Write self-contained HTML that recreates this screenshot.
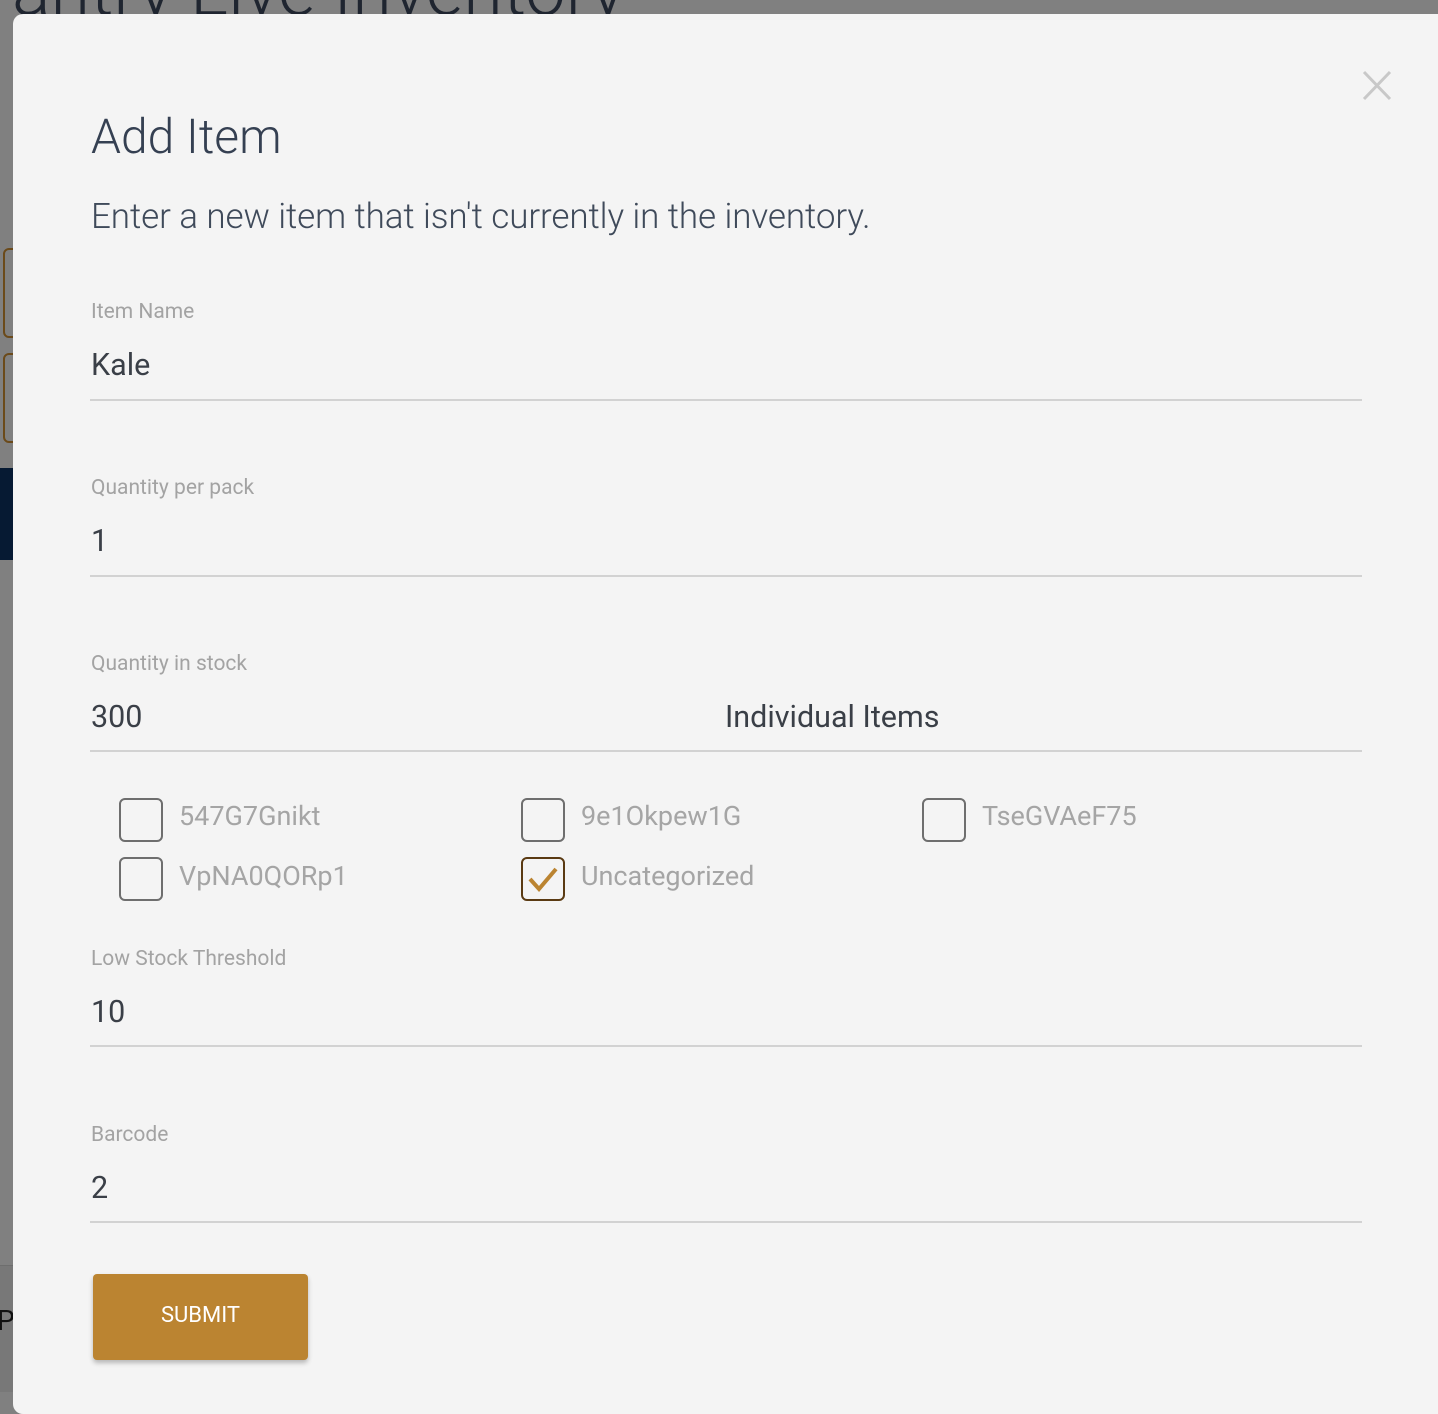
<!DOCTYPE html>
<html><head><meta charset="utf-8"><style>
*{margin:0;padding:0;box-sizing:border-box}
body{width:1438px;height:1392px;overflow:hidden;background:#808080;position:relative;font-family:"Roboto","Liberation Sans",sans-serif}
.bgt{position:absolute;left:-32px;top:-52px;font-size:72px;font-weight:300;color:#1f2530;white-space:nowrap}
.ob{position:absolute;left:3px;width:30px;border:2px solid #6b4a1a;border-radius:6px}
.modal{position:absolute;left:13px;top:14px;width:1440px;height:1400px;background:#f4f4f4;border-radius:10px}
.a{position:absolute;white-space:nowrap}
.h1{left:91px;top:108px;font-size:48px;font-weight:300;color:#354052}
.sub{left:91px;top:196px;font-size:35px;font-weight:300;color:#3f4a5a;letter-spacing:-0.1px}
.lbl{font-size:21px;color:#a3a3a3;left:91px}
.val{font-size:30.5px;color:#3a3f47;left:91px}
.ul{position:absolute;height:2px;background:#d2d2d2}
.cb{position:absolute;width:44px;height:44px;border:2px solid #6e6e6e;border-radius:6px}
.cl{font-size:27px;color:#a5a5a5}
.btn{position:absolute;left:93px;top:1274px;width:215px;height:86px;background:#bb8431;border-radius:4px;box-shadow:0 3px 5px rgba(0,0,0,.25);color:#fff;font-size:22px;text-align:center;line-height:84px}
</style></head><body>
<div class="bgt">Pantry Live Inventory</div>
<div class="ob" style="top:248px;height:90px"></div>
<div class="ob" style="top:353px;height:90px"></div>
<div style="position:absolute;left:0;top:468px;width:20px;height:92px;background:#061a33"></div>
<div style="position:absolute;left:0;top:1265px;width:20px;height:127px;background:#787878;border-top:1px solid #6e6e6e"></div>
<div class="a" style="left:-3px;top:1304px;font-size:28px;color:#111">P</div>
<div class="modal"></div>
<svg style="position:absolute;left:1362px;top:70px" width="30" height="31"><path d="M2 2L28 29M28 2L2 29" stroke="#c8c8c8" stroke-width="3"/></svg>
<div class="a h1">Add Item</div>
<div class="a sub">Enter a new item that isn't currently in the inventory.</div>

<div class="a lbl" style="top:300px">Item Name</div>
<div class="a val" style="top:348px">Kale</div>
<div class="ul" style="left:90px;top:399px;width:1272px"></div>

<div class="a lbl" style="top:476px">Quantity per pack</div>
<div class="a val" style="top:524px">1</div>
<div class="ul" style="left:90px;top:575px;width:1272px"></div>

<div class="a lbl" style="top:652px">Quantity in stock</div>
<div class="a val" style="top:700px">300</div>
<div class="a val" style="left:725px;top:700px">Individual Items</div>
<div class="ul" style="left:90px;top:750px;width:1272px"></div>

<div class="cb" style="left:119px;top:798px"></div><div class="a cl" style="left:179px;top:800px">547G7Gnikt</div>
<div class="cb" style="left:521px;top:798px"></div><div class="a cl" style="left:581px;top:800px">9e1Okpew1G</div>
<div class="cb" style="left:922px;top:798px"></div><div class="a cl" style="left:982px;top:800px">TseGVAeF75</div>
<div class="cb" style="left:119px;top:857px"></div><div class="a cl" style="left:179px;top:860px">VpNA0QORp1</div>
<div class="cb" style="left:521px;top:857px;border-color:#5a3a12"></div>
<svg style="position:absolute;left:521px;top:857px" width="44" height="44"><path d="M9 22L18 32L35 12" fill="none" stroke="#bb8431" stroke-width="4"/></svg>
<div class="a cl" style="left:581px;top:860px">Uncategorized</div>

<div class="a lbl" style="top:947px">Low Stock Threshold</div>
<div class="a val" style="top:995px">10</div>
<div class="ul" style="left:90px;top:1045px;width:1272px"></div>

<div class="a lbl" style="top:1123px">Barcode</div>
<div class="a val" style="top:1171px">2</div>
<div class="ul" style="left:90px;top:1221px;width:1272px"></div>

<div class="btn">SUBMIT</div>
</body></html>
